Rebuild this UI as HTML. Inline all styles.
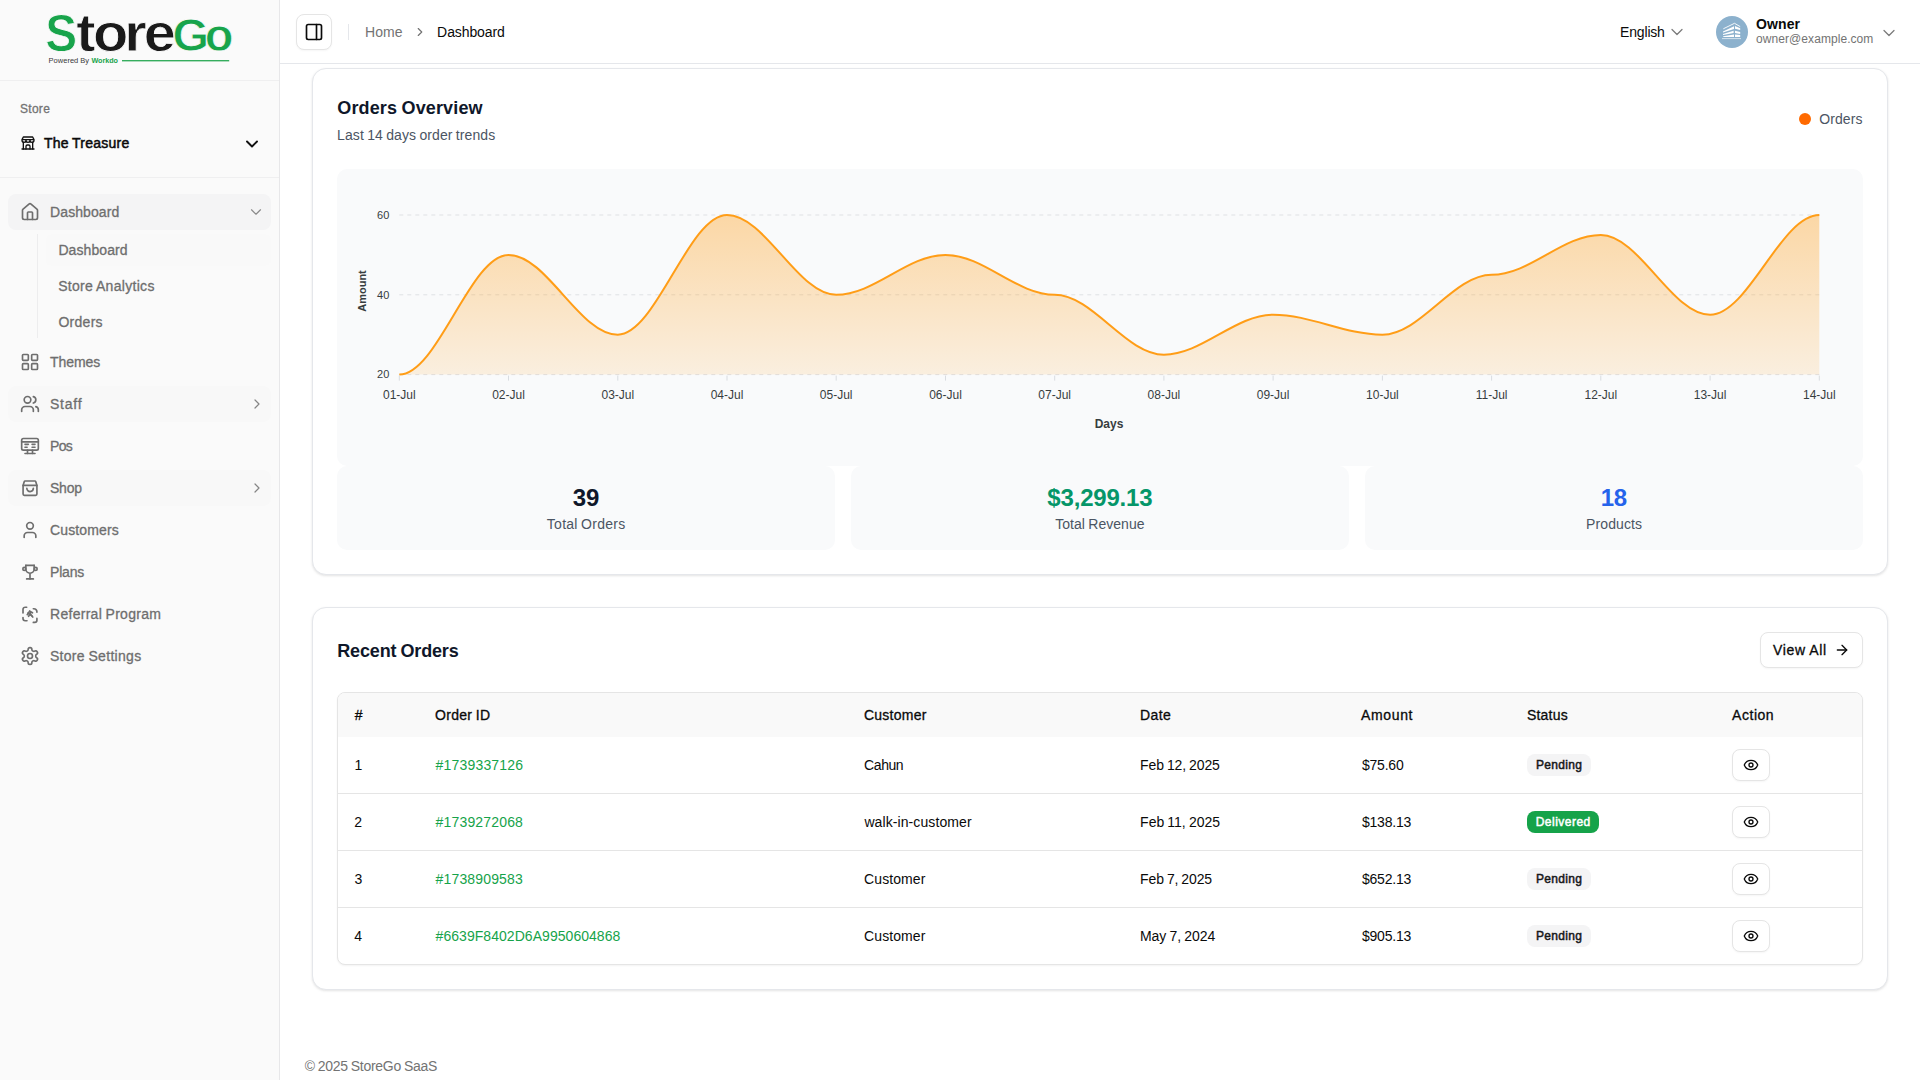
<!DOCTYPE html>
<html lang="en">
<head>
<meta charset="utf-8">
<title>Dashboard - StoreGo SaaS</title>
<style>
*{box-sizing:border-box;margin:0;padding:0}
html,body{width:1920px;height:1080px;overflow:hidden;background:#fff}
body{font-family:"Liberation Sans",sans-serif;font-size:14px;color:#0f172a;position:relative}
.abs{position:absolute}
.t{position:absolute;white-space:nowrap;line-height:20px;height:20px}
.m{-webkit-text-stroke:.3px currentColor}
.sb{-webkit-text-stroke:.5px currentColor}
.b{font-weight:700}
svg.ic{position:absolute;fill:none;stroke:currentColor;stroke-width:2;stroke-linecap:round;stroke-linejoin:round}
#sb{position:absolute;left:0;top:0;width:280px;height:1080px;background:#fafafa;border-right:1px solid #e7e7e9}
#sb .hl{position:absolute;left:0;width:279px;height:1px;background:#efeff0}
.mi{position:absolute;left:8px;width:263px;height:36px;border-radius:8px}
.si{position:absolute;left:46px;width:225px;height:32px;border-radius:6px}
#hd{position:absolute;left:280px;top:0;width:1640px;height:64px;background:#fff;border-bottom:1px solid #e5e7eb}
.card{position:absolute;left:312px;width:1576px;background:#fff;border:1px solid #e5e7eb;border-radius:14px;box-shadow:0 1px 3px rgba(0,0,0,.08),0 1px 2px rgba(0,0,0,.04)}
.box{position:absolute;background:#f9fafb;border-radius:10px}
.btn{position:absolute;border:1px solid #e5e5e5;background:#fff;box-shadow:0 1px 2px rgba(0,0,0,.04)}
</style>
</head>
<body>
<div id="sb">
<svg class="abs" style="left:0;top:0;width:279px;height:80px" viewBox="0 0 279 80" font-family="Liberation Sans, sans-serif" font-weight="700"><g stroke="#fafafa" stroke-width=".8"><text transform="translate(45.3 51.4) scale(.92 1)" font-size="52" fill="#18a44b">S</text><text transform="translate(0 51.4) scale(1.09 1)" font-size="53" fill="#1a1a1a" x="69.9 85.3 114 131.9">tore</text><text y="51.4" font-size="47" fill="#18a44b" x="172.5 204.8">Go</text></g><text x="48.6" y="62.6" font-size="6.4" font-weight="400" fill="#3a3a3a" textLength="40.5" lengthAdjust="spacingAndGlyphs">Powered By</text><text x="91.4" y="62.6" font-size="6.4" font-weight="700" fill="#18a44b" textLength="26.6" lengthAdjust="spacingAndGlyphs">Workdo</text><rect x="122" y="60" width="107.2" height="1.4" fill="#35ad5e"/></svg>
<div class="hl" style="top:80px"></div>
<div class="t m" style="top:99px;left:20.00px;font-size:12px;letter-spacing:0.281px;color:#737373;">Store</div>
<svg class="ic" viewBox="0 0 24 24" style="left:20px;top:135px;width:16px;height:16px;color:#111;"><path d="M3 21h18"/><path d="M3 7v1a3 3 0 0 0 6 0V7m0 1a3 3 0 0 0 6 0V7m0 1a3 3 0 0 0 6 0V7H3l2-4h14l2 4"/><path d="M5 21V10.85"/><path d="M19 21V10.85"/><path d="M9 21v-4a2 2 0 0 1 2-2h2a2 2 0 0 1 2 2v4"/></svg>
<div class="t sb" style="top:133px;left:44.00px;letter-spacing:0.227px;word-spacing:-0.571px;color:#0a0a0a;">The Treasure</div>
<svg class="ic" viewBox="0 0 24 24" style="left:242.1px;top:133.5px;width:20px;height:20px;color:#111;stroke-width:2.3;"><path d="m6 9 6 6 6-6"/></svg>
<div class="hl" style="top:177px"></div>
<div class="mi" style="top:194px;background:#f4f4f5"></div><svg class="ic" viewBox="0 0 24 24" style="left:20px;top:202px;width:20px;height:20px;color:#6e6e6e;"><path d="M15 21v-8a1 1 0 0 0-1-1h-4a1 1 0 0 0-1 1v8"/><path d="M3 10a2 2 0 0 1 .709-1.528l7-5.999a2 2 0 0 1 2.582 0l7 5.999A2 2 0 0 1 21 10v9a2 2 0 0 1-2 2H5a2 2 0 0 1-2-2z"/></svg><div class="t m" style="top:202px;left:50.12px;letter-spacing:0.078px;color:#6e6e6e;">Dashboard</div><svg class="ic" viewBox="0 0 24 24" style="left:247.4px;top:203.3px;width:18px;height:18px;color:#8a8a8a;stroke-width:1.55;"><path d="m6 9 6 6 6-6"/></svg>
<div class="abs" style="left:37px;top:234px;width:1px;height:104px;background:#ededee"></div>
<div class="si" style="top:234px;background:#f9f9f9"></div><div class="t m" style="top:240px;left:58.42px;letter-spacing:0.078px;color:#6e6e6e;">Dashboard</div>
<div class="si" style="top:270px"></div><div class="t m" style="top:276px;left:58.17px;letter-spacing:0.304px;word-spacing:-0.627px;color:#6e6e6e;">Store Analytics</div>
<div class="si" style="top:306px"></div><div class="t m" style="top:312px;left:58.42px;letter-spacing:0.275px;color:#6e6e6e;">Orders</div>
<div class="mi" style="top:344px"></div><svg class="ic" viewBox="0 0 24 24" style="left:20px;top:352px;width:20px;height:20px;color:#6e6e6e;"><rect width="7" height="7" x="3" y="3" rx="1"/><rect width="7" height="7" x="14" y="3" rx="1"/><rect width="7" height="7" x="14" y="14" rx="1"/><rect width="7" height="7" x="3" y="14" rx="1"/></svg><div class="t m" style="top:352px;left:50.00px;letter-spacing:-0.075px;color:#6e6e6e;">Themes</div>
<div class="mi" style="top:386px;background:#f8f8f8"></div><svg class="ic" viewBox="0 0 24 24" style="left:20px;top:394px;width:20px;height:20px;color:#6e6e6e;"><path d="M16 21v-2a4 4 0 0 0-4-4H6a4 4 0 0 0-4 4v2"/><circle cx="9" cy="7" r="4"/><path d="M22 21v-2a4 4 0 0 0-3-3.87"/><path d="M16 3.13a4 4 0 0 1 0 7.75"/></svg><div class="t m" style="top:394px;left:49.88px;letter-spacing:0.812px;color:#6e6e6e;">Staff</div><svg class="ic" viewBox="0 0 24 24" style="left:248.5px;top:396px;width:16px;height:16px;color:#858585;stroke-width:1.8;"><path d="m9 18 6-6-6-6"/></svg>
<div class="mi" style="top:428px"></div><svg class="ic" viewBox="0 0 24 24" style="left:20px;top:436px;width:20px;height:20px;color:#6e6e6e;"><rect width="20" height="14" x="2" y="3" rx="2"/><path d="M2 7h20"/><path d="M6 10h4"/><path d="M14.5 10H18"/><path d="M6 13.5h2.5"/><path d="M14.5 13.5H18"/><path d="M9 17v4"/><path d="M15 17v4"/><path d="M6 21h12"/></svg><div class="t m" style="top:436px;left:50.12px;letter-spacing:-0.688px;color:#6e6e6e;">Pos</div>
<div class="mi" style="top:470px;background:#f8f8f8"></div><svg class="ic" viewBox="0 0 24 24" style="left:20px;top:478px;width:20px;height:20px;color:#6e6e6e;"><path d="M6.200 3.600h11.600a1.200 1.200 0 0 1 1.150.870L20.300 8.900V19.300a1.500 1.500 0 0 1-1.500 1.500H5.200a1.500 1.500 0 0 1-1.500-1.500V8.900l1.350-4.430a1.200 1.200 0 0 1 1.150-.870z"/><path d="M3.700 8.900h16.600"/><path d="M16 12.400a3.900 3.900 0 0 1-7.800 0"/></svg><div class="t m" style="top:478px;left:49.88px;letter-spacing:-0.167px;color:#6e6e6e;">Shop</div><svg class="ic" viewBox="0 0 24 24" style="left:248.5px;top:480px;width:16px;height:16px;color:#858585;stroke-width:1.8;"><path d="m9 18 6-6-6-6"/></svg>
<div class="mi" style="top:512px"></div><svg class="ic" viewBox="0 0 24 24" style="left:20px;top:520px;width:20px;height:20px;color:#6e6e6e;"><path d="M19 21v-2a4 4 0 0 0-4-4H9a4 4 0 0 0-4 4v2"/><circle cx="12" cy="7" r="4"/></svg><div class="t m" style="top:520px;left:50.00px;letter-spacing:0.125px;color:#6e6e6e;">Customers</div>
<div class="mi" style="top:554px"></div><svg class="ic" viewBox="0 0 24 24" style="left:20px;top:562px;width:20px;height:20px;color:#6e6e6e;"><path d="M8 20.300h8"/><path d="M12 14.500v5.800"/><path d="M7 4h10"/><path d="M17 4v4.500a5 5 0 0 1-10 0V4"/><circle cx="5.200" cy="8.300" r="1.800"/><circle cx="18.800" cy="8.300" r="1.800"/></svg><div class="t m" style="top:562px;left:50.12px;letter-spacing:-0.219px;color:#6e6e6e;">Plans</div>
<div class="mi" style="top:596px"></div><svg class="ic" viewBox="0 0 24 24" style="left:20px;top:604px;width:20px;height:20px;color:#6e6e6e;"><path d="M3.600 10.800V6.500a2.600 2.600 0 0 1 2.600-2.600h1.800"/><path d="M16 5.700h.700a3.600 3.600 0 0 1 3.600 3.600v.600"/><path d="M3.600 16.200v1.300a2.600 2.600 0 0 0 2.600 2.600h2.200"/><path d="M20.300 17.300v2.200a2.600 2.600 0 0 1-2.600 2.600h-1.700"/><path d="M11.600 8.600l-2.900 4.200"/><path d="M11.600 8.600l3.400 2"/><path d="M9.500 10.900l4.700 3.100"/><path d="M13 10.200l-2.700 4.600"/><path d="M12.500 12.400l2.800 3.200"/></svg><div class="t m" style="top:604px;left:50.12px;letter-spacing:0.267px;word-spacing:-0.627px;color:#6e6e6e;">Referral Program</div>
<div class="mi" style="top:638px"></div><svg class="ic" viewBox="0 0 24 24" style="left:20px;top:646px;width:20px;height:20px;color:#6e6e6e;"><path d="M12.22 2h-.44a2 2 0 0 0-2 2v.18a2 2 0 0 1-1 1.73l-.43.25a2 2 0 0 1-2 0l-.15-.08a2 2 0 0 0-2.73.73l-.22.38a2 2 0 0 0 .73 2.73l.15.1a2 2 0 0 1 1 1.72v.51a2 2 0 0 1-1 1.74l-.15.09a2 2 0 0 0-.73 2.73l.22.38a2 2 0 0 0 2.73.73l.15-.08a2 2 0 0 1 2 0l.43.25a2 2 0 0 1 1 1.73V20a2 2 0 0 0 2 2h.44a2 2 0 0 0 2-2v-.18a2 2 0 0 1 1-1.73l.43-.25a2 2 0 0 1 2 0l.15.08a2 2 0 0 0 2.73-.73l.22-.39a2 2 0 0 0-.73-2.73l-.15-.08a2 2 0 0 1-1-1.74v-.5a2 2 0 0 1 1-1.74l.15-.09a2 2 0 0 0 .73-2.73l-.22-.38a2 2 0 0 0-2.73-.73l-.15.08a2 2 0 0 1-2 0l-.43-.25a2 2 0 0 1-1-1.73V4a2 2 0 0 0-2-2z"/><circle cx="12" cy="12" r="3"/></svg><div class="t m" style="top:646px;left:49.88px;letter-spacing:0.308px;word-spacing:-0.627px;color:#6e6e6e;">Store Settings</div>
</div>
<div id="hd">
<div class="btn" style="left:16px;top:14px;width:36px;height:36px;border-radius:8px"></div><svg class="ic" viewBox="0 0 24 24" style="left:24px;top:22px;width:20px;height:20px;color:#0a0a0a;"><rect width="18" height="18" x="3" y="3" rx="2"/><path d="M15 3v18"/></svg>
<div class="abs" style="left:68px;top:24px;width:1px;height:16px;background:#e5e7eb"></div>
<div class="t" style="top:22px;left:85.12px;letter-spacing:0.042px;color:#737373;">Home</div><svg class="ic" viewBox="0 0 24 24" style="left:133px;top:25px;width:14px;height:14px;color:#737373;"><path d="m9 18 6-6-6-6"/></svg><div class="t" style="top:22px;left:157.12px;letter-spacing:-0.094px;color:#0a0a0a;">Dashboard</div>
<div class="t" style="top:22px;left:1340.12px;letter-spacing:-0.188px;color:#0a0a0a;">English</div><svg class="ic" viewBox="0 0 24 24" style="left:1386.8px;top:22.4px;width:20px;height:20px;color:#7b7b7b;stroke-width:1.5;"><path d="m6 9 6 6 6-6"/></svg>
<div class="abs" style="left:1436px;top:16px;width:32px;height:32px;border-radius:50%;background:#8cb1cd"></div><svg class="abs" viewBox="0 0 32 32" style="left:1436px;top:16px;width:32px;height:32px"><g fill="#fff"><polygon points="7,15.400 18,10.300 18,13 7,16.400"/><polygon points="7,18 17.600,14.800 17.600,17.100 7,19"/><polygon points="7.200,20.200 18,18.500 18,21 7.200,21.100"/><polygon points="19,10.100 24.200,12.200 24.200,14 19,12.800"/><polygon points="19,14.800 24.200,16 24.200,17.900 19,17"/><polygon points="19,18.500 24.200,19.100 24.200,21 19,21"/></g><path d="M7.300 12.800 18.500 7.300 24.200 10.600" fill="none" stroke="#fff" stroke-width=".9"/><path d="M6 22.600h19" stroke="#fff" stroke-opacity=".65" stroke-width="1" fill="none"/></svg>
<div class="t b" style="top:14px;left:1476.12px;letter-spacing:0.094px;color:#0a0a0a;">Owner</div><div class="t" style="top:31px;left:1476.12px;font-size:12px;line-height:16px;height:16px;letter-spacing:0.062px;color:#737373;">owner@example.com</div><svg class="ic" viewBox="0 0 24 24" style="left:1599.2px;top:22.6px;width:20px;height:20px;color:#7b7b7b;stroke-width:1.5;"><path d="m6 9 6 6 6-6"/></svg>
</div>
<div class="card" style="top:68px;height:507px">
<div class="t b" style="top:25px;left:24.25px;font-size:18px;line-height:28px;height:28px;letter-spacing:0.141px;word-spacing:-0.734px;color:#0f172a;">Orders Overview</div>
<div class="t" style="top:56px;left:24.12px;letter-spacing:0.083px;word-spacing:-0.682px;color:#4b5563;">Last 14 days order trends</div>
<div class="abs" style="left:1486px;top:44px;width:12px;height:12px;border-radius:50%;background:#ff6a00"></div><div class="t" style="top:40px;left:1506.25px;letter-spacing:0.075px;color:#4b5563;">Orders</div>
<div class="box" style="left:24px;top:100px;width:1526px;height:297px"></div>
<svg class="abs" style="left:24px;top:100px;width:1526px;height:297px" viewBox="337 169 1526 297" font-family="Liberation Sans, sans-serif">
<defs><linearGradient id="ag" x1="0" y1="0" x2="0" y2="1"><stop offset="0" stop-color="#ff9d17" stop-opacity=".375"/><stop offset="1" stop-color="#ff9d17" stop-opacity=".125"/></linearGradient></defs>
<line x1="399.3" x2="1819.3" y1="215.0" y2="215.0" stroke="#dfe1e4" stroke-width="1" stroke-dasharray="4 4"/>
<line x1="399.3" x2="1819.3" y1="294.8" y2="294.8" stroke="#dfe1e4" stroke-width="1" stroke-dasharray="4 4"/>
<line x1="399.3" x2="1819.3" y1="374.6" y2="374.6" stroke="#dfe1e4" stroke-width="1" stroke-dasharray="4 4"/>
<path d="M399.30 374.60C437.53 374.60 470.30 254.90 508.53 254.90C546.76 254.90 579.53 334.70 617.76 334.70C655.99 334.70 688.76 215.00 726.99 215.00C765.22 215.00 797.99 294.80 836.22 294.80C874.45 294.80 907.22 254.90 945.45 254.90C983.68 254.90 1016.45 294.80 1054.68 294.80C1092.92 294.80 1125.68 354.65 1163.92 354.65C1202.15 354.65 1234.92 314.75 1273.15 314.75C1311.38 314.75 1344.15 334.70 1382.38 334.70C1420.61 334.70 1453.38 274.85 1491.61 274.85C1529.84 274.85 1562.61 234.95 1600.84 234.95C1639.07 234.95 1671.84 314.75 1710.07 314.75C1748.30 314.75 1781.07 215.00 1819.30 215.00L1819.30 374.6L399.30 374.6Z" fill="url(#ag)"/>
<path d="M399.30 374.60C437.53 374.60 470.30 254.90 508.53 254.90C546.76 254.90 579.53 334.70 617.76 334.70C655.99 334.70 688.76 215.00 726.99 215.00C765.22 215.00 797.99 294.80 836.22 294.80C874.45 294.80 907.22 254.90 945.45 254.90C983.68 254.90 1016.45 294.80 1054.68 294.80C1092.92 294.80 1125.68 354.65 1163.92 354.65C1202.15 354.65 1234.92 314.75 1273.15 314.75C1311.38 314.75 1344.15 334.70 1382.38 334.70C1420.61 334.70 1453.38 274.85 1491.61 274.85C1529.84 274.85 1562.61 234.95 1600.84 234.95C1639.07 234.95 1671.84 314.75 1710.07 314.75C1748.30 314.75 1781.07 215.00 1819.30 215.00" fill="none" stroke="#ff9d17" stroke-width="2"/>
<line x1="399.3" x2="399.3" y1="375.6" y2="380.6" stroke="#d9dce0" stroke-width="1"/><line x1="508.5" x2="508.5" y1="375.6" y2="380.6" stroke="#d9dce0" stroke-width="1"/><line x1="617.8" x2="617.8" y1="375.6" y2="380.6" stroke="#d9dce0" stroke-width="1"/><line x1="727.0" x2="727.0" y1="375.6" y2="380.6" stroke="#d9dce0" stroke-width="1"/><line x1="836.2" x2="836.2" y1="375.6" y2="380.6" stroke="#d9dce0" stroke-width="1"/><line x1="945.5" x2="945.5" y1="375.6" y2="380.6" stroke="#d9dce0" stroke-width="1"/><line x1="1054.7" x2="1054.7" y1="375.6" y2="380.6" stroke="#d9dce0" stroke-width="1"/><line x1="1163.9" x2="1163.9" y1="375.6" y2="380.6" stroke="#d9dce0" stroke-width="1"/><line x1="1273.1" x2="1273.1" y1="375.6" y2="380.6" stroke="#d9dce0" stroke-width="1"/><line x1="1382.4" x2="1382.4" y1="375.6" y2="380.6" stroke="#d9dce0" stroke-width="1"/><line x1="1491.6" x2="1491.6" y1="375.6" y2="380.6" stroke="#d9dce0" stroke-width="1"/><line x1="1600.8" x2="1600.8" y1="375.6" y2="380.6" stroke="#d9dce0" stroke-width="1"/><line x1="1710.1" x2="1710.1" y1="375.6" y2="380.6" stroke="#d9dce0" stroke-width="1"/><line x1="1819.3" x2="1819.3" y1="375.6" y2="380.6" stroke="#d9dce0" stroke-width="1"/>
<g font-size="11" fill="#373d3f" text-anchor="end"><text x="389.3" y="219.0">60</text><text x="389.3" y="298.8">40</text><text x="389.3" y="378.0">20</text></g>
<g font-size="12" fill="#373d3f" text-anchor="middle"><text x="399.3" y="399">01-Jul</text><text x="508.5" y="399">02-Jul</text><text x="617.8" y="399">03-Jul</text><text x="727.0" y="399">04-Jul</text><text x="836.2" y="399">05-Jul</text><text x="945.5" y="399">06-Jul</text><text x="1054.7" y="399">07-Jul</text><text x="1163.9" y="399">08-Jul</text><text x="1273.1" y="399">09-Jul</text><text x="1382.4" y="399">10-Jul</text><text x="1491.6" y="399">11-Jul</text><text x="1600.8" y="399">12-Jul</text><text x="1710.1" y="399">13-Jul</text><text x="1819.3" y="399">14-Jul</text></g>
<text x="1109" y="428" font-size="12" font-weight="700" fill="#373d3f" text-anchor="middle">Days</text>
<text transform="translate(366 291) rotate(-90)" font-size="11" font-weight="700" fill="#373d3f" text-anchor="middle">Amount</text>
</svg>
<div class="box" style="left:24px;top:397px;width:498px;height:84px"></div><div class="t b" style="top:413px;left:259.84px;font-size:24px;line-height:32px;height:32px;letter-spacing:-0.250px;color:#0f172a;">39</div><div class="t" style="top:445px;left:233.85px;letter-spacing:0.250px;word-spacing:-0.682px;color:#4b5563;">Total Orders</div>
<div class="box" style="left:538px;top:397px;width:498px;height:84px"></div><div class="t b" style="top:413px;left:734.34px;font-size:24px;line-height:32px;height:32px;letter-spacing:-0.188px;color:#059669;">$3,299.13</div><div class="t" style="top:445px;left:742.24px;letter-spacing:0.042px;word-spacing:-0.682px;color:#4b5563;">Total Revenue</div>
<div class="box" style="left:1052px;top:397px;width:498px;height:84px"></div><div class="t b" style="top:413px;left:1287.84px;font-size:24px;line-height:32px;height:32px;letter-spacing:-0.375px;color:#2563eb;">18</div><div class="t" style="top:445px;left:1273.06px;letter-spacing:0.107px;color:#4b5563;">Products</div>
</div>
<div class="card" style="top:607px;height:383px">
<div class="t b" style="top:29px;left:24.25px;font-size:18px;line-height:28px;height:28px;letter-spacing:-0.156px;word-spacing:-0.734px;color:#0f172a;">Recent Orders</div>
<div class="btn" style="left:1447px;top:24px;width:103px;height:36px;border-radius:8px"></div><div class="t m" style="top:32px;left:1460.00px;letter-spacing:0.714px;word-spacing:-0.627px;color:#0a0a0a;">View All</div><svg class="ic" viewBox="0 0 24 24" style="left:1521px;top:34px;width:16px;height:16px;color:#0a0a0a;"><path d="M5 12h14"/><path d="m12 5 7 7-7 7"/></svg>
<div class="abs" style="left:24px;top:84px;width:1526px;height:273px;border:1px solid #e5e5e5;border-radius:8px;overflow:hidden;background:#fff;box-shadow:0 1px 2px rgba(0,0,0,.05)"><div class="abs" style="left:0;top:0;width:1524px;height:44px;background:#f9f9f9"></div><div class="abs" style="left:0;top:100px;width:1524px;height:1px;background:#e5e5e5"></div><div class="abs" style="left:0;top:157px;width:1524px;height:1px;background:#e5e5e5"></div><div class="abs" style="left:0;top:214px;width:1524px;height:1px;background:#e5e5e5"></div></div>
<div class="t m" style="top:97px;left:41.75px;color:#0a0a0a;">#</div><div class="t m" style="top:97px;left:122.12px;letter-spacing:0.268px;word-spacing:-0.627px;color:#0a0a0a;">Order ID</div><div class="t m" style="top:97px;left:551.00px;letter-spacing:0.232px;color:#0a0a0a;">Customer</div><div class="t m" style="top:97px;left:827.12px;letter-spacing:0.333px;color:#0a0a0a;">Date</div><div class="t m" style="top:97px;left:1048.00px;letter-spacing:0.650px;color:#0a0a0a;">Amount</div><div class="t m" style="top:97px;left:1213.88px;letter-spacing:0.225px;color:#0a0a0a;">Status</div><div class="t m" style="top:97px;left:1419.00px;letter-spacing:0.550px;color:#0a0a0a;">Action</div>
<div class="t" style="top:147px;left:41.50px;color:#0a0a0a;">1</div><div class="t" style="top:147px;left:122.62px;letter-spacing:0.175px;color:#16a34a;">#1739337126</div><div class="t" style="top:147px;left:551.12px;letter-spacing:-0.438px;color:#0a0a0a;">Cahun</div><div class="t" style="top:147px;left:827.12px;letter-spacing:-0.125px;word-spacing:-0.682px;color:#0a0a0a;">Feb 12, 2025</div><div class="t" style="top:147px;left:1048.88px;letter-spacing:-0.200px;color:#0a0a0a;">$75.60</div><div class="abs" style="left:1214px;top:146px;width:64px;height:22px;border-radius:8px;background:#f4f4f5"></div><div class="t sb" style="top:149px;left:1223.03px;font-size:12px;line-height:16px;height:16px;letter-spacing:0.312px;color:#18181b;">Pending</div><div class="btn" style="left:1419px;top:141px;width:38px;height:32px;border-radius:8px"></div><svg class="ic" viewBox="0 0 24 24" style="left:1430px;top:149px;width:16px;height:16px;color:#0a0a0a;"><path d="M2.062 12.348a1 1 0 0 1 0-.696 10.750 10.750 0 0 1 19.876 0 1 1 0 0 1 0 .696 10.750 10.750 0 0 1-19.876 0"/><circle cx="12" cy="12" r="3"/></svg>
<div class="t" style="top:204px;left:41.25px;color:#0a0a0a;">2</div><div class="t" style="top:204px;left:122.62px;letter-spacing:0.163px;color:#16a34a;">#1739272068</div><div class="t" style="top:204px;left:551.38px;letter-spacing:0.092px;color:#0a0a0a;">walk-in-customer</div><div class="t" style="top:204px;left:827.12px;letter-spacing:-0.023px;word-spacing:-0.682px;color:#0a0a0a;">Feb 11, 2025</div><div class="t" style="top:204px;left:1048.88px;letter-spacing:-0.188px;color:#0a0a0a;">$138.13</div><div class="abs" style="left:1214px;top:203px;width:72px;height:22px;border-radius:8px;background:#16a34a"></div><div class="t sb" style="top:206px;left:1222.69px;font-size:12px;line-height:16px;height:16px;letter-spacing:0.484px;color:#fff;">Delivered</div><div class="btn" style="left:1419px;top:198px;width:38px;height:32px;border-radius:8px"></div><svg class="ic" viewBox="0 0 24 24" style="left:1430px;top:206px;width:16px;height:16px;color:#0a0a0a;"><path d="M2.062 12.348a1 1 0 0 1 0-.696 10.750 10.750 0 0 1 19.876 0 1 1 0 0 1 0 .696 10.750 10.750 0 0 1-19.876 0"/><circle cx="12" cy="12" r="3"/></svg>
<div class="t" style="top:261px;left:41.38px;color:#0a0a0a;">3</div><div class="t" style="top:261px;left:122.62px;letter-spacing:0.150px;color:#16a34a;">#1738909583</div><div class="t" style="top:261px;left:551.12px;letter-spacing:0.071px;color:#0a0a0a;">Customer</div><div class="t" style="top:261px;left:827.12px;letter-spacing:-0.138px;word-spacing:-0.682px;color:#0a0a0a;">Feb 7, 2025</div><div class="t" style="top:261px;left:1048.88px;letter-spacing:-0.188px;color:#0a0a0a;">$652.13</div><div class="abs" style="left:1214px;top:260px;width:64px;height:22px;border-radius:8px;background:#f4f4f5"></div><div class="t sb" style="top:263px;left:1223.03px;font-size:12px;line-height:16px;height:16px;letter-spacing:0.312px;color:#18181b;">Pending</div><div class="btn" style="left:1419px;top:255px;width:38px;height:32px;border-radius:8px"></div><svg class="ic" viewBox="0 0 24 24" style="left:1430px;top:263px;width:16px;height:16px;color:#0a0a0a;"><path d="M2.062 12.348a1 1 0 0 1 0-.696 10.750 10.750 0 0 1 19.876 0 1 1 0 0 1 0 .696 10.750 10.750 0 0 1-19.876 0"/><circle cx="12" cy="12" r="3"/></svg>
<div class="t" style="top:318px;left:41.25px;color:#0a0a0a;">4</div><div class="t" style="top:318px;left:122.62px;letter-spacing:0.045px;color:#16a34a;">#6639F8402D6A9950604868</div><div class="t" style="top:318px;left:551.12px;letter-spacing:0.071px;color:#0a0a0a;">Customer</div><div class="t" style="top:318px;left:826.88px;letter-spacing:-0.037px;word-spacing:-0.682px;color:#0a0a0a;">May 7, 2024</div><div class="t" style="top:318px;left:1048.88px;letter-spacing:-0.188px;color:#0a0a0a;">$905.13</div><div class="abs" style="left:1214px;top:317px;width:64px;height:22px;border-radius:8px;background:#f4f4f5"></div><div class="t sb" style="top:320px;left:1223.03px;font-size:12px;line-height:16px;height:16px;letter-spacing:0.312px;color:#18181b;">Pending</div><div class="btn" style="left:1419px;top:312px;width:38px;height:32px;border-radius:8px"></div><svg class="ic" viewBox="0 0 24 24" style="left:1430px;top:320px;width:16px;height:16px;color:#0a0a0a;"><path d="M2.062 12.348a1 1 0 0 1 0-.696 10.750 10.750 0 0 1 19.876 0 1 1 0 0 1 0 .696 10.750 10.750 0 0 1-19.876 0"/><circle cx="12" cy="12" r="3"/></svg>
</div>
<div class="t" style="top:1056px;left:304.75px;letter-spacing:-0.271px;word-spacing:-0.682px;color:#737373;">© 2025 StoreGo SaaS</div>
</body>
</html>
